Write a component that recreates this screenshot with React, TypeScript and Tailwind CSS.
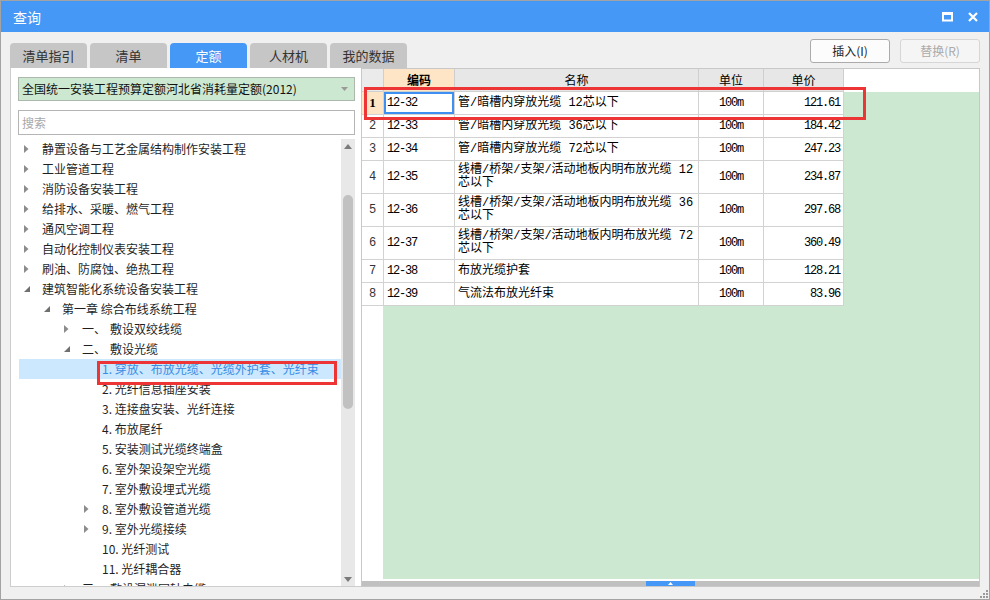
import React from "react";

const tree = [
  { lv: 0, arrow: "r", t: "静置设备与工艺金属结构制作安装工程" },
  { lv: 0, arrow: "r", t: "工业管道工程" },
  { lv: 0, arrow: "r", t: "消防设备安装工程" },
  { lv: 0, arrow: "r", t: "给排水、采暖、燃气工程" },
  { lv: 0, arrow: "r", t: "通风空调工程" },
  { lv: 0, arrow: "r", t: "自动化控制仪表安装工程" },
  { lv: 0, arrow: "r", t: "刷油、防腐蚀、绝热工程" },
  { lv: 0, arrow: "d", t: "建筑智能化系统设备安装工程" },
  { lv: 1, arrow: "d", t: "第一章 综合布线系统工程" },
  { lv: 2, arrow: "r", t: "一、", t2: "敷设双绞线缆" },
  { lv: 2, arrow: "d", t: "二、", t2: "敷设光缆" },
  { lv: 3, arrow: "", t: "1. 穿放、布放光缆、光缆外护套、光纤束", sel: true },
  { lv: 3, arrow: "", t: "2. 光纤信息插座安装" },
  { lv: 3, arrow: "", t: "3. 连接盘安装、光纤连接" },
  { lv: 3, arrow: "", t: "4. 布放尾纤" },
  { lv: 3, arrow: "", t: "5. 安装测试光缆终端盒" },
  { lv: 3, arrow: "", t: "6. 室外架设架空光缆" },
  { lv: 3, arrow: "", t: "7. 室外敷设埋式光缆" },
  { lv: 3, arrow: "r", t: "8. 室外敷设管道光缆" },
  { lv: 3, arrow: "r", t: "9. 室外光缆接续" },
  { lv: 3, arrow: "", t: "10. 光纤测试" },
  { lv: 3, arrow: "", t: "11. 光纤耦合器" },
  { lv: 2, arrow: "r", t: "三、", t2: "敷设漏泄同轴电缆" },
];

const indent = ["pl-0", "pl-[20px]", "pl-[40px]", "pl-[60px]"];

const rows = [
  { n: "1", code: "12-32", name: ["管/暗槽内穿放光缆 12芯以下"], price: "121.61" },
  { n: "2", code: "12-33", name: ["管/暗槽内穿放光缆 36芯以下"], price: "184.42" },
  { n: "3", code: "12-34", name: ["管/暗槽内穿放光缆 72芯以下"], price: "247.23" },
  { n: "4", code: "12-35", name: ["线槽/桥架/支架/活动地板内明布放光缆 12", "芯以下"], price: "234.87" },
  { n: "5", code: "12-36", name: ["线槽/桥架/支架/活动地板内明布放光缆 36", "芯以下"], price: "297.68" },
  { n: "6", code: "12-37", name: ["线槽/桥架/支架/活动地板内明布放光缆 72", "芯以下"], price: "360.49" },
  { n: "7", code: "12-38", name: ["布放光缆护套"], price: "128.21" },
  { n: "8", code: "12-39", name: ["气流法布放光纤束"], price: "83.96" },
];

function Arrow({ kind }: { kind: string }) {
  if (kind === "r")
    return (
      <svg width="5" height="8" viewBox="0 0 5 8">
        <path d="M0 0L4.5 4L0 8Z" fill="#8c8c8c" />
      </svg>
    );
  if (kind === "d")
    return (
      <svg width="6" height="6" viewBox="0 0 6 6">
        <path d="M6 0V6H0Z" fill="#707070" />
      </svg>
    );
  return null;
}

const tabs = ["清单指引", "清单", "定额", "人材机", "我的数据"];

export default function App() {
  return (
    <div className="w-[990px] h-[600px] flex flex-col bg-[#f0f0f0] border border-[#a3a3a3] font-['Microsoft_YaHei','Noto_Sans_CJK_SC',sans-serif] text-[12px] text-[#222] overflow-hidden">
      {/* title bar */}
      <div className="h-[31px] shrink-0 bg-[#4598f6] flex items-center justify-between pl-[12px] pr-[11px]">
        <span className="text-white text-[14px] leading-none">查询</span>
        <div className="flex items-center gap-[15px]">
          <svg width="11" height="10" viewBox="0 0 11 10">
            <rect x="1" y="1.5" width="9" height="7" fill="none" stroke="#fff" strokeWidth="2" />
            <rect x="0" y="0" width="11" height="3" fill="#fff" />
          </svg>
          <svg width="10" height="10" viewBox="0 0 10 10">
            <path d="M1 1L9 9M9 1L1 9" stroke="#fff" strokeWidth="2.2" />
          </svg>
        </div>
      </div>

      {/* tabs + buttons */}
      <div className="h-[36px] shrink-0 flex pl-[9px] pr-[9px]">
        <div className="flex items-end gap-[3px]">
          {tabs.map((t) => (
            <div
              key={t}
              className={
                t === "定额"
                  ? "w-[77px] h-[25px] rounded-t-[4px] bg-[#4598f6] text-white flex items-center justify-center text-[13px]"
                  : "w-[77px] h-[25px] rounded-t-[4px] bg-[#c6c6c6] text-[#333] flex items-center justify-center text-[13px]"
              }
            >
              {t}
            </div>
          ))}
        </div>
        <div className="ml-auto flex gap-[10px] pt-[7px]">
          <div className="w-[80px] h-[24px] rounded-[3px] border border-[#ababab] bg-[#fcfcfc] flex items-center justify-center text-[#222]">
            插入(I)
          </div>
          <div className="w-[80px] h-[24px] rounded-[3px] border border-[#d6d6d6] bg-[#f5f5f5] flex items-center justify-center text-[#aaaaaa]">
            替换(R)
          </div>
        </div>
      </div>

      {/* content */}
      <div className="h-[519px] shrink-0 flex pl-[9px] pr-[9px]">
        {/* left panel */}
        <div className="w-[351px] flex flex-col bg-white border-l border-b border-[#cdcdcd]">
          <div className="ml-[7px] mt-[9px] w-[337px] h-[24px] shrink-0 bg-[#cde8d1] border border-[#adb8ad] flex items-center pl-[3px] pr-[6px] text-[#111]">
            <span>全国统一安装工程预算定额河北省消耗量定额(2012)</span>
            <svg className="ml-auto" width="7" height="4" viewBox="0 0 7 4">
              <path d="M0 0H7L3.5 4Z" fill="#9a9a9a" />
            </svg>
          </div>
          <div className="ml-[7px] mt-[9px] w-[337px] h-[25px] shrink-0 border border-[#b5b5b5] flex items-center pl-[3px] text-[#a8a8a8]">
            搜索
          </div>
          <div className="mt-[4px] flex-1 min-h-0 flex">
            <div className="ml-[8px] w-[322px] overflow-hidden">
              {tree.map((r, i) => (
                <div
                  key={i}
                  className={
                    (r.sel ? "relative bg-[#cce8ff] text-[#3a8ce4] " : "text-[#1f1f1f] ") +
                    "flex h-[20px] items-center whitespace-nowrap " +
                    indent[r.lv]
                  }
                >
                  <div className="w-[23px] pl-[5px] flex items-center shrink-0">
                    <Arrow kind={r.arrow} />
                  </div>
                  <span>{r.t}</span>
                  {r.t2 && <span className="ml-[4px]">{r.t2}</span>}
                  {r.sel && (
                    <div className="absolute z-10 left-[78px] top-[2px] w-[240px] h-[24px] border-[3px] border-[#ee3535]" />
                  )}
                </div>
              ))}
            </div>
            {/* vertical scrollbar */}
            <div className="w-[14px] bg-[#e8e8e8] flex flex-col items-center">
              <div className="h-[14px] flex items-center justify-center">
                <svg width="8" height="5" viewBox="0 0 8 5">
                  <path d="M0 5H8L4 0Z" fill="#7a7a7a" />
                </svg>
              </div>
              <div className="mt-[42px] w-[10px] h-[214px] rounded-[5px] bg-[#c1c1c1]" />
              <div className="mt-auto h-[14px] flex items-center justify-center">
                <svg width="8" height="5" viewBox="0 0 8 5">
                  <path d="M0 0H8L4 5Z" fill="#7a7a7a" />
                </svg>
              </div>
            </div>
            <div className="w-[5px]" />
          </div>
        </div>

        {/* right panel */}
        <div className="relative flex-1 flex flex-col bg-white border border-[#c8c8c8] text-[12px] text-black">
          {/* header */}
          <div className="flex h-[23px] shrink-0">
            <div className="w-[22px] bg-[#ebebeb] border-r border-b border-[#cfcfcf]" />
            <div className="w-[71px] bg-[#fde5c6] border-r border-b border-[#cfcfcf] flex items-center justify-center font-bold">编码</div>
            <div className="w-[244px] bg-[#e7e7e7] border-r border-b border-[#cfcfcf] flex items-center justify-center">名称</div>
            <div className="w-[65px] bg-[#e7e7e7] border-r border-b border-[#cfcfcf] flex items-center justify-center">单位</div>
            <div className="w-[80px] bg-[#e7e7e7] border-r border-b border-[#cfcfcf] flex items-center justify-center">单价</div>
            <div className="flex-1 bg-white" />
          </div>
          {/* rows */}
          {rows.map((r) => (
            <div key={r.n} className={r.name.length > 1 ? "flex h-[33px] shrink-0" : "flex h-[23px] shrink-0"}>
              <div
                className={
                  r.n === "1"
                    ? "w-[22px] bg-[#fde5c6] border-r border-b border-[#d2d2d2] flex items-center justify-center font-bold font-['Liberation_Serif',serif] text-[13px]"
                    : "w-[22px] bg-white border-r border-b border-[#d2d2d2] flex items-center justify-center font-['Liberation_Mono',monospace] text-[#333]"
                }
              >
                {r.n}
              </div>
              <div
                className={
                  (r.n === "1" ? "shadow-[inset_0_0_0_2px_#3d8ff2] " : "") +
                  "w-[71px] border-r border-b border-[#d2d2d2] flex items-center pl-[3px] font-['Liberation_Mono',monospace] tracking-[-1.2px]"
                }
              >
                {r.code}
              </div>
              <div className="w-[244px] border-r border-b border-[#d2d2d2] flex flex-col justify-center pl-[3px] leading-[13px] font-['Liberation_Mono','Noto_Sans_CJK_SC',monospace] whitespace-nowrap">
                {r.name.map((l, i) => (
                  <span key={i}>{l}</span>
                ))}
              </div>
              <div className="w-[65px] border-r border-b border-[#d2d2d2] flex items-center justify-center font-['Liberation_Mono',monospace] tracking-[-1.2px]">
                100m
              </div>
              <div className="w-[80px] border-r border-b border-[#d2d2d2] flex items-center justify-end pr-[3px] font-['Liberation_Mono',monospace] tracking-[-1.2px]">
                {r.price}
              </div>
              <div className="flex-1 bg-[#cde8d1]" />
            </div>
          ))}
          {/* empty area */}
          <div className="flex-1 min-h-0 flex">
            <div className="w-[21px] bg-white" />
            <div className="flex-1 bg-[#cde8d1]" />
          </div>
          <div className="h-[2px] shrink-0 bg-white" />
          {/* horizontal bar */}
          <div className="h-[5px] shrink-0 bg-[#c0c0c0] flex">
            <div className="ml-[284px] w-[49px] bg-[#4598f6] flex items-center justify-center">
              <svg width="5" height="3" viewBox="0 0 5 3">
                <path d="M0 3H5L2.5 0Z" fill="#fff" />
              </svg>
            </div>
          </div>
          {/* highlight box */}
          <div className="absolute left-[2px] top-[18px] w-[502px] h-[33px] border-[3px] border-[#ee3535]" />
        </div>
      </div>

      {/* bottom strip */}
      <div className="flex-1 flex justify-end items-end pr-[1px] pb-[1px]">
        <svg width="8" height="8" viewBox="0 0 8 8">
          <rect x="6" y="0" width="2" height="2" fill="#9a9a9a" />
          <rect x="3" y="3" width="2" height="2" fill="#9a9a9a" />
          <rect x="6" y="3" width="2" height="2" fill="#9a9a9a" />
          <rect x="0" y="6" width="2" height="2" fill="#9a9a9a" />
          <rect x="3" y="6" width="2" height="2" fill="#9a9a9a" />
          <rect x="6" y="6" width="2" height="2" fill="#9a9a9a" />
        </svg>
      </div>
    </div>
  );
}
